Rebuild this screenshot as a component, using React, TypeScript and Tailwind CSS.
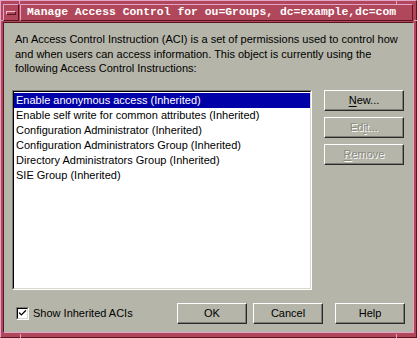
import { Check } from "lucide-react";

const acis = [
  "Enable anonymous access (Inherited)",
  "Enable self write for common attributes (Inherited)",
  "Configuration Administrator (Inherited)",
  "Configuration Administrators Group (Inherited)",
  "Directory Administrators Group (Inherited)",
  "SIE Group (Inherited)",
];

function Button({
  children,
  disabled,
  className = "",
}: {
  children: React.ReactNode;
  disabled?: boolean;
  className?: string;
}) {
  return (
    <button
      className={`flex items-center justify-center h-[21px] border border-t-white border-l-white border-r-[#2a2a2a] border-b-[#2a2a2a] shadow-[inset_-1px_-1px_0_#7e7e76] ${
        disabled ? "text-[#8a8a80] [text-shadow:1px_1px_0_#ffffff]" : "text-black"
      } ${className}`}
    >
      {children}
    </button>
  );
}

export default function App() {
  return (
    <div className="w-[417px] h-[338px] relative flex flex-col bg-[#b0475a] border border-t-[#e4a3c8] border-l-[#e4a3c8] border-r-[#5a1420] border-b-[#5a1420] px-[2px] pt-[3px] pb-[4px] font-['Liberation_Sans',Arial,sans-serif] text-[11px]">
      {/* title bar */}
      <div className="flex h-[17px] gap-px">
        <div className="w-[16px] flex items-center justify-center border border-t-[#e4a3c8] border-l-[#e4a3c8] border-r-[#5a1420] border-b-[#5a1420]">
          <div className="w-[10px] h-[4px] border border-t-[#f0c0d8] border-l-[#f0c0d8] border-r-[#5a1420] border-b-[#5a1420]" />
        </div>
        <div className="flex-1 flex items-center pl-[6px] border border-t-[#e4a3c8] border-l-[#e4a3c8] border-r-[#5a1420] border-b-[#5a1420] mr-px overflow-hidden">
          <span className="font-['Liberation_Mono',monospace] font-bold text-[11.4px] text-white whitespace-nowrap leading-none">
            Manage Access Control for ou=Groups, dc=example,dc=com
          </span>
        </div>
      </div>

      {/* client area */}
      <div className="mt-px flex-1 flex flex-col bg-[#b5b5a9] border border-t-[#5a1420] border-l-[#5a1420] border-r-[#e4a3c8] border-b-[#e4a3c8] px-[8px] pt-[9px]">
        <p className="pl-[3px] leading-[14.5px] text-black">
          An Access Control Instruction (ACI) is a set of permissions used to control how
          <br />
          and when users can access information. This object is currently using the
          <br />
          following Access Control Instructions:
        </p>

        <div className="flex mt-[14px] gap-[12px]">
          <div className="w-[300px] h-[200px] border border-t-[#7e7e76] border-l-[#7e7e76] border-r-white border-b-white">
            <div className="h-full bg-white border border-t-black border-l-black border-r-[#d8d8cc] border-b-[#d8d8cc] pt-px">
              {acis.map((aci, i) => (
                <div
                  key={aci}
                  className={`h-[15px] leading-[15px] pl-[2px] whitespace-nowrap ${
                    i === 0 ? "bg-[#0000a8] text-white" : "text-black"
                  }`}
                >
                  {aci}
                </div>
              ))}
            </div>
          </div>

          <div className="flex flex-col gap-[6px] w-[80px]">
            <Button>
              <span className="underline underline-offset-2">N</span>ew...
            </Button>
            <Button disabled>
              Ed<span className="underline underline-offset-2">i</span>t...
            </Button>
            <Button disabled>
              <span className="underline underline-offset-2">R</span>emove
            </Button>
          </div>
        </div>

        <div className="flex items-center mt-[13px]">
          <div className="ml-[4px] w-[13px] h-[13px] border border-t-[#7e7e76] border-l-[#7e7e76] border-r-white border-b-white">
            <div className="w-full h-full bg-white border border-t-black border-l-black border-r-[#d8d8cc] border-b-[#d8d8cc] flex items-center justify-center">
              <Check size={10} strokeWidth={3.5} className="text-black" />
            </div>
          </div>
          <span className="ml-[4px] text-black">Show Inherited ACIs</span>
          <div className="ml-auto flex gap-[6px]">
            <Button className="w-[70px]">OK</Button>
            <Button className="w-[70px]">Cancel</Button>
            <Button className="w-[70px] ml-[6px]">Help</Button>
          </div>
        </div>
      </div>

      {/* frame corner marks */}
      <div className="absolute left-[18px] top-[-1px] w-px h-[4px] bg-[#e4a3c8]" />
      <div className="absolute left-[395px] top-[-1px] w-px h-[4px] bg-[#e4a3c8]" />
      <div className="absolute left-[-1px] top-[19px] w-[3px] h-px bg-[#e4a3c8]" />
      <div className="absolute right-[-1px] top-[19px] w-[3px] h-px bg-[#e4a3c8]" />
      <div className="absolute left-[19px] bottom-[-1px] w-px h-[4px] bg-[#e4a3c8]" />
      <div className="absolute left-[395px] bottom-[-1px] w-px h-[4px] bg-[#e4a3c8]" />
    </div>
  );
}
